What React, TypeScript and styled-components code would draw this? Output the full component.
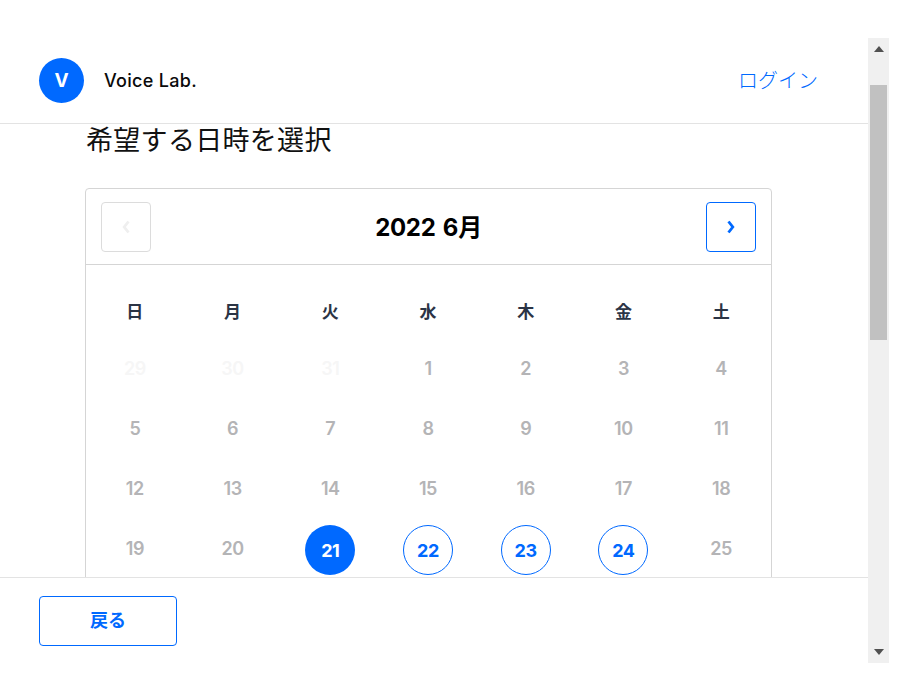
import React from 'react';
import styled, { createGlobalStyle } from 'styled-components';

const blue = '#0069ff';
const fontStack = `Inter, "Noto Sans CJK JP", sans-serif`;

const GlobalStyle = createGlobalStyle`
  html, body {
    margin: 0;
    background: #fff;
  }
  body {
    font-family: ${fontStack};
  }
`;

const Window = styled.div`
  display: flex;
  width: 889px;
  height: 625px;
  margin-top: 38px;
`;

const Main = styled.div`
  display: flex;
  flex-direction: column;
  flex: 1;
  min-width: 0;
`;

const Header = styled.header`
  display: flex;
  align-items: center;
  justify-content: space-between;
  flex: none;
  box-sizing: border-box;
  height: 86px;
  padding: 0 50px 0 39px;
  border-bottom: 1px solid #e3e3e3;
`;

const Brand = styled.div`
  display: flex;
  align-items: center;
  gap: 20px;
`;

const Avatar = styled.div`
  display: flex;
  align-items: center;
  justify-content: center;
  width: 45px;
  height: 45px;
  border-radius: 50%;
  background: ${blue};
  color: #fff;
  font-size: 19px;
  font-weight: 700;
`;

const BrandName = styled.div`
  font-size: 18px;
  font-weight: 500;
  letter-spacing: 0.3px;
  color: #0a0a0a;
`;

const LoginLink = styled.a`
  font-size: 20px;
  font-weight: 300;
  color: ${blue};
  text-decoration: none;
  margin-bottom: 2px;
`;

const Content = styled.main`
  flex: 1;
  min-height: 0;
  overflow: hidden;
  padding: 0 96px 0 85px;
`;

const Title = styled.h1`
  box-sizing: border-box;
  margin: 0 0 30px;
  height: 34px;
  padding: 1px 0 0 1px;
  font-size: 27px;
  line-height: 32px;
  font-weight: 400;
  letter-spacing: 0.3px;
  color: #111;
`;

const Calendar = styled.section`
  border: 1px solid #d5d5d5;
  border-radius: 4px;
`;

const CalendarHeader = styled.div`
  display: flex;
  align-items: center;
  justify-content: space-between;
  height: 75px;
  padding: 0 15px;
  border-bottom: 1px solid #d5d5d5;
`;

const MonthLabel = styled.div`
  font-size: 24px;
  font-weight: 700;
  color: #000;
  word-spacing: 2px;
  letter-spacing: -0.3px;
  margin-bottom: 2px;
`;

const NavButton = styled.button<{ $disabled?: boolean }>`
  display: flex;
  align-items: center;
  justify-content: center;
  width: 50px;
  height: 50px;
  padding: 0;
  background: #fff;
  border: 1px solid ${(p) => (p.$disabled ? '#dcdcdc' : blue)};
  border-radius: 4px;
  color: ${(p) => (p.$disabled ? '#efefef' : blue)};
`;

const Grid = styled.div`
  display: grid;
  grid-template-columns: repeat(7, 1fr);
  padding: 15px 1px 0 0;
`;

const WeekDay = styled.div`
  display: flex;
  align-items: center;
  justify-content: center;
  box-sizing: border-box;
  height: 60px;
  padding-top: 1px;
  font-size: 17px;
  font-weight: 700;
  color: #2b3445;
`;

const DayCell = styled.div`
  display: flex;
  align-items: center;
  justify-content: center;
  height: 60px;
`;

type DayKind = 'past' | 'off' | 'open' | 'selected';

const dayColor: Record<DayKind, string> = {
  past: '#f6f6f6',
  off: '#b4b4b6',
  open: blue,
  selected: '#fff',
};

const Day = styled.div<{ $kind: DayKind }>`
  display: flex;
  align-items: center;
  justify-content: center;
  box-sizing: border-box;
  width: 50px;
  height: 50px;
  border-radius: 50%;
  font-size: 18px;
  font-weight: ${(p) => (p.$kind === 'open' || p.$kind === 'selected' ? 700 : 600)};
  letter-spacing: -0.4px;
  color: ${(p) => dayColor[p.$kind]};
  background: ${(p) => (p.$kind === 'selected' ? blue : 'transparent')};
  border: ${(p) => (p.$kind === 'open' ? `1px solid ${blue}` : 'none')};
  padding-bottom: ${(p) => (p.$kind === 'past' || p.$kind === 'off' ? '4px' : '0')};
`;

const Footer = styled.footer`
  flex: none;
  box-sizing: border-box;
  height: 86px;
  padding: 18px 39px;
  border-top: 1px solid #e3e3e3;
`;

const BackButton = styled.button`
  width: 138px;
  height: 50px;
  padding: 0 0 4px;
  background: #fff;
  border: 1px solid ${blue};
  border-radius: 4px;
  color: ${blue};
  font-family: ${fontStack};
  font-size: 18px;
  font-weight: 700;
`;

const ScrollBar = styled.div`
  display: flex;
  flex-direction: column;
  align-items: center;
  flex: none;
  width: 21px;
  background: #f0f0f0;
`;

const ScrollArrow = styled.div<{ $down?: boolean }>`
  display: flex;
  align-items: center;
  justify-content: center;
  flex: none;
  box-sizing: border-box;
  height: 21px;
  padding-bottom: ${(p) => (p.$down ? '2px' : '0')};
  color: #505050;
`;

const ScrollThumb = styled.div`
  flex: none;
  width: 17px;
  height: 255px;
  margin-top: 26px;
  background: #c1c1c1;
`;

const ScrollSpacer = styled.div`
  flex: 1;
`;

const weekDays = ['日', '月', '火', '水', '木', '金', '土'];

const days: { label: number; kind: DayKind }[] = [
  { label: 29, kind: 'past' },
  { label: 30, kind: 'past' },
  { label: 31, kind: 'past' },
  ...Array.from({ length: 25 }, (_, i) => {
    const label = i + 1;
    let kind: DayKind = 'off';
    if (label === 21) kind = 'selected';
    if (label >= 22 && label <= 24) kind = 'open';
    return { label, kind };
  }),
];

function Chevron({ left }: { left?: boolean }) {
  return (
    <svg width="10" height="14" viewBox="0 0 10 14" fill="none">
      <path
        d={left ? 'M7.5 1.5 L3.2 7 L7.5 12.5' : 'M2.5 1.5 L6.8 7 L2.5 12.5'}
        stroke="currentColor"
        strokeWidth="2.8"
      />
    </svg>
  );
}

export default function App() {
  return (
    <>
      <GlobalStyle />
      <Window>
        <Main>
          <Header>
            <Brand>
              <Avatar>V</Avatar>
              <BrandName>Voice Lab.</BrandName>
            </Brand>
            <LoginLink href="#">ログイン</LoginLink>
          </Header>
          <Content>
            <Title>希望する日時を選択</Title>
            <Calendar>
              <CalendarHeader>
                <NavButton $disabled>
                  <Chevron left />
                </NavButton>
                <MonthLabel>2022 6月</MonthLabel>
                <NavButton>
                  <Chevron />
                </NavButton>
              </CalendarHeader>
              <Grid>
                {weekDays.map((d) => (
                  <WeekDay key={d}>{d}</WeekDay>
                ))}
                {days.map((d) => (
                  <DayCell key={`${d.kind}-${d.label}`}>
                    <Day $kind={d.kind}>{d.label}</Day>
                  </DayCell>
                ))}
              </Grid>
            </Calendar>
          </Content>
          <Footer>
            <BackButton>戻る</BackButton>
          </Footer>
        </Main>
        <ScrollBar>
          <ScrollArrow>
            <svg width="10" height="6" viewBox="0 0 10 6">
              <path d="M5 0 L10 6 L0 6 Z" fill="currentColor" />
            </svg>
          </ScrollArrow>
          <ScrollThumb />
          <ScrollSpacer />
          <ScrollArrow $down>
            <svg width="10" height="6" viewBox="0 0 10 6">
              <path d="M0 0 L10 0 L5 6 Z" fill="currentColor" />
            </svg>
          </ScrollArrow>
        </ScrollBar>
      </Window>
    </>
  );
}
